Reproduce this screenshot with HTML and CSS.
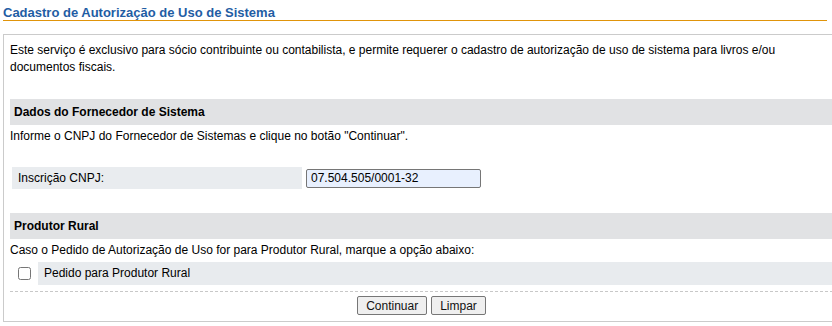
FILE: index.html
```html
<!DOCTYPE html>
<html lang="pt-BR">
<head>
  <meta charset="UTF-8">
  <title>Cadastro de Autorização de Uso de Sistema</title>
  <link rel="stylesheet" href="styles.css">
</head>
<body>

<div class="page">
  <h1 class="page-title">Cadastro de Autorização de Uso de Sistema</h1>

  <form class="box">
    <p class="intro">Este serviço é exclusivo para sócio contribuinte ou contabilista, e permite requerer o cadastro de autorização de uso de sistema para livros e/ou documentos fiscais.</p>

    <div class="section-title">Dados do Fornecedor de Sistema</div>
    <p class="hint">Informe o CNPJ do Fornecedor de Sistemas e clique no botão "Continuar".</p>
    <div class="field-row">
      <label class="field-label" for="cnpj">Inscrição CNPJ:</label>
      <input class="field-input" type="text" id="cnpj" value="07.504.505/0001-32">
    </div>

    <div class="section-title second">Produtor Rural</div>
    <p class="hint">Caso o Pedido de Autorização de Uso for para Produtor Rural, marque a opção abaixo:</p>
    <div class="check-row">
      <div class="check-cell"><input type="checkbox" id="produtor"></div>
      <label class="check-label" for="produtor">Pedido para Produtor Rural</label>
    </div>

    <div class="actions">
      <button type="button">Continuar</button>
      <button type="reset">Limpar</button>
    </div>
  </form>
</div>

</body>
</html>
```

FILE: styles.css
```css
html, body {
  margin: 0;
  overflow: hidden;
}
body {
  background: #fff;
  color: #000;
  font-family: "Liberation Sans", Arial, sans-serif;
  font-size: 12px;
}
.page {
  padding-left: 3px;
}
.page-title {
  width: 824px;
  margin: 0;
  padding-top: 5px;
  font-size: 13px;
  line-height: 15px;
  font-weight: bold;
  color: #1f5da4;
  border-bottom: 1px solid #e0940a;
}
.box {
  width: 823px;
  margin-top: 13px;
  padding: 7px 6px 6px 6px;
  border: 1px solid #cbcbcb;
}
.intro {
  margin: 0 0 23px;
  line-height: 17px;
}
.section-title {
  height: 26px;
  line-height: 26px;
  padding-left: 4px;
  font-weight: bold;
  background-color: #e1e2e4;
}
.section-title.second {
  margin-top: 24px;
}
.hint {
  margin: 3px 0 0;
  line-height: 17px;
}
.field-row {
  display: flex;
  align-items: center;
  gap: 4px;
  margin: 22px 0 0 2px;
}
.field-label {
  width: 284px;
  height: 22px;
  line-height: 22px;
  padding-left: 6px;
  background-color: #e9ecef;
}
.field-input {
  box-sizing: border-box;
  width: 175px;
  height: 19px;
  margin: 0;
  padding: 0 4px;
  font-family: "Liberation Sans", Arial, sans-serif;
  font-size: 12px;
  color: #000;
  background-color: #e8f0fe;
  border: 1px solid #767676;
  border-radius: 2px;
}
.check-row {
  display: flex;
  gap: 2px;
  margin: 3px 0 0 2px;
  height: 23px;
}
.check-cell {
  width: 24px;
  display: flex;
  align-items: center;
  justify-content: center;
}
.check-cell input {
  margin: 0;
  width: 13px;
  height: 13px;
}
.check-label {
  flex: 1;
  line-height: 23px;
  padding-left: 6px;
  background-color: #e8ebee;
}
.actions {
  display: flex;
  justify-content: center;
  gap: 4px;
  margin-top: 6px;
  padding-top: 4px;
  border-top: 1px dashed #c8c8c8;
}
button {
  height: 19px;
  padding: 0 8px;
  font-family: "Liberation Sans", Arial, sans-serif;
  font-size: 12px;
  color: #111;
  background-color: #efefef;
  border: 1px solid #767676;
  border-radius: 2px;
}
```
